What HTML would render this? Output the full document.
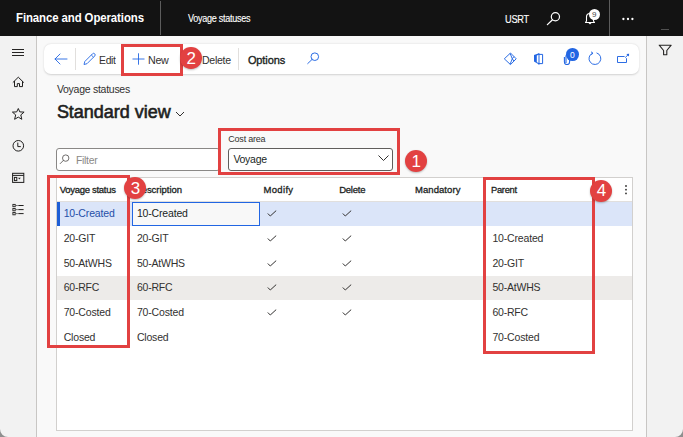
<!DOCTYPE html><html><head><meta charset="utf-8"><style>
html,body{margin:0;padding:0;width:683px;height:437px;overflow:hidden;background:#f8f8f8}
body{position:relative;font-family:"Liberation Sans",sans-serif}
body>div,body>svg{position:absolute}
.t{white-space:nowrap;line-height:1}
</style></head><body>
<div style="left:0px;top:0px;width:683px;height:437px;background:#f9f9f9"></div>
<div style="left:0px;top:36px;width:36px;height:401px;background:#f2f2f2"></div>
<div style="left:36px;top:36px;width:1px;height:401px;background:#c8c6c4"></div>
<div style="left:647px;top:36px;width:36px;height:401px;background:#f2f2f2"></div>
<div style="left:646px;top:36px;width:1px;height:401px;background:#c8c6c4"></div>
<div style="left:0px;top:0px;width:683px;height:36px;background:#131313"></div>
<div style="left:160px;top:1px;width:1px;height:34px;background:#5c5c5c"></div>
<div style="left:609px;top:0px;width:1px;height:36px;background:#5c5c5c"></div>
<div style="left:661px;top:29px;width:8px;height:1px;background:#505050"></div>
<div class="t" style="left:16.40px;top:12.04px;font-size:12px;color:#ffffff;letter-spacing:-0.100px;font-weight:700;transform:scaleX(0.9510);transform-origin:0 0;">Finance and Operations</div>
<div class="t" style="left:188.20px;top:13.64px;font-size:10px;color:#ffffff;letter-spacing:-0.300px;transform:scaleX(0.9034);transform-origin:0 0;-webkit-text-stroke:0.12px #fff">Voyage statuses</div>
<div class="t" style="left:504.90px;top:14.01px;font-size:10.5px;color:#ffffff;letter-spacing:-0.300px;transform:scaleX(0.8766);transform-origin:0 0;-webkit-text-stroke:0.15px #fff">USRT</div>
<svg style="left:545px;top:10px;" width="18" height="18" viewBox="0 0 18 18"><circle cx="10.4" cy="6.8" r="4.1" fill="none" stroke="#fff" stroke-width="1.2"/><line x1="7.5" y1="9.7" x2="2.4" y2="14.6" stroke="#fff" stroke-width="1.3" stroke-linecap="round"/></svg>
<svg style="left:582px;top:9px;" width="16" height="16" viewBox="0 0 16 16"><path d="M3.5 13.5 L4.5 12 V8 A3.5 3.5 0 0 1 11.5 8 V12 L12.5 13.5 Z" fill="none" stroke="#fff" stroke-width="1.1" stroke-linejoin="round"/><path d="M6.6 13.9 L8 15 L9.4 13.9" fill="none" stroke="#fff" stroke-width="1"/></svg>
<div style="left:588.7px;top:8.7px;width:11.2px;height:11.2px;background:#fff;border-radius:50%"></div>
<div class="t" style="left:592.10px;top:10.73px;font-size:8px;color:#444;letter-spacing:0.000px;">9</div>
<svg style="left:618px;top:15px;" width="20" height="8" viewBox="0 0 20 8"><circle cx="5.4" cy="4" r="1.15" fill="#fff"/><circle cx="10" cy="4" r="1.15" fill="#fff"/><circle cx="14.4" cy="4" r="1.15" fill="#fff"/></svg>
<div style="left:12px;top:49px;width:12px;height:1px;background:#252423"></div>
<div style="left:12px;top:52px;width:12px;height:1px;background:#252423"></div>
<div style="left:12px;top:55px;width:12px;height:1px;background:#252423"></div>
<svg style="left:11px;top:75px;" width="14" height="14" viewBox="0 0 14 14"><path d="M1.8 7.6 L7.3 2.2 L12.8 7.6 M3.5 6 V11.6 H6.3 V8.6 H8.5 V11.6 H11.5 V6" fill="none" stroke="#201f1e" stroke-width="1" stroke-linejoin="miter"/></svg>
<svg style="left:11px;top:107px;" width="14" height="14" viewBox="0 0 14 14"><path d="M7.3 1.5 L8.8 4.9 L13.1 5.1 L9.8 7.9 L10.8 12.3 L7.3 10.1 L3.6 12.3 L4.7 7.9 L1.4 5.1 L5.7 4.9 Z" fill="none" stroke="#201f1e" stroke-width="1" stroke-linejoin="miter"/></svg>
<svg style="left:11px;top:139px;" width="14" height="14" viewBox="0 0 14 14"><circle cx="7.3" cy="6.8" r="5.3" fill="none" stroke="#201f1e" stroke-width="1"/><path d="M6.8 3.6 V7.6 H9.8" fill="none" stroke="#201f1e" stroke-width="1"/></svg>
<svg style="left:11px;top:171px;" width="14" height="14" viewBox="0 0 14 14"><rect x="1.6" y="2.3" width="11.2" height="9.1" fill="none" stroke="#201f1e" stroke-width="1"/><line x1="1.6" y1="4.4" x2="12.8" y2="4.4" stroke="#201f1e" stroke-width="1"/><rect x="3.4" y="6.4" width="2.4" height="3.2" fill="none" stroke="#201f1e" stroke-width="1"/><path d="M7.2 6.8 L9.8 6.8 L8.2 8.4 Z" fill="#201f1e"/></svg>
<svg style="left:11px;top:203px;" width="14" height="14" viewBox="0 0 14 14"><rect x="1.9" y="1.4" width="2.3" height="2.3" fill="none" stroke="#201f1e" stroke-width="0.9"/><rect x="1.9" y="5.5" width="2.3" height="2.3" fill="none" stroke="#201f1e" stroke-width="0.9"/><rect x="1.9" y="9.5" width="2.3" height="2.3" fill="none" stroke="#201f1e" stroke-width="0.9"/><path d="M5.4 2.5 H6.5 M7.3 2.5 H12.6 M5.4 6.6 H6.5 M7.3 6.6 H12.6 M5.4 10.6 H6.5 M7.3 10.6 H12.6" stroke="#201f1e" stroke-width="1"/></svg>
<svg style="left:658px;top:44px;" width="15" height="12" viewBox="0 0 15 12"><path d="M1.2 1.2 H13.2 L8.8 6.5 V10.8 H5.6 V6.5 Z" fill="none" stroke="#252423" stroke-width="1.1" stroke-linejoin="round"/></svg>
<div style="left:44px;top:44px;width:595px;height:30px;background:#fff;border-radius:7px;box-shadow:0 0.5px 2px rgba(0,0,0,0.16)"></div>
<svg style="left:53px;top:52px;" width="16" height="14" viewBox="0 0 16 14"><path d="M7 2 L2 7 L7 12 M2 7 H14" fill="none" stroke="#2266e3" stroke-width="0.9" stroke-linejoin="round" stroke-linecap="round"/></svg>
<div style="left:75px;top:48px;width:1px;height:22px;background:#e1dfdd"></div>
<svg style="left:82px;top:52px;" width="15" height="14" viewBox="0 0 15 14"><path d="M2 12.5 L2.8 9.5 L10.5 1.8 A1.4 1.4 0 0 1 12.7 4 L5 11.7 Z M9.3 3 L11.5 5.2" fill="none" stroke="#2266e3" stroke-width="0.9" stroke-linejoin="round"/></svg>
<div class="t" style="left:98.70px;top:55.09px;font-size:11px;color:#323130;letter-spacing:-0.300px;transform:scaleX(0.9416);transform-origin:0 0;">Edit</div>
<svg style="left:131px;top:52px;" width="15" height="14" viewBox="0 0 15 14"><path d="M7.5 1.3 V12.7 M1.5 7 H13.5" fill="none" stroke="#2266e3" stroke-width="0.9"/></svg>
<div class="t" style="left:148.40px;top:55.09px;font-size:11px;color:#323130;letter-spacing:-0.300px;transform:scaleX(0.9717);transform-origin:0 0;">New</div>
<div class="t" style="left:201.80px;top:55.09px;font-size:11px;color:#323130;letter-spacing:-0.300px;transform:scaleX(0.9605);transform-origin:0 0;">Delete</div>
<div style="left:238px;top:48px;width:1px;height:22px;background:#e1dfdd"></div>
<div class="t" style="left:247.90px;top:55.09px;font-size:11px;color:#201f1e;letter-spacing:-0.101px;-webkit-text-stroke:0.35px #201f1e">Options</div>
<svg style="left:305px;top:51px;" width="16" height="15" viewBox="0 0 16 15"><circle cx="9.8" cy="5.7" r="3.8" fill="none" stroke="#2266e3" stroke-width="0.95"/><line x1="7.1" y1="8.4" x2="2.7" y2="12.6" stroke="#2266e3" stroke-width="0.95" stroke-linecap="round"/></svg>
<svg style="left:500px;top:49px;" width="20" height="20" viewBox="0 0 20 20"><path d="M4.3 9.8 L10.5 4 L16.2 9.8 L10.5 15.6 Z M10.1 4.4 L12.3 9.8 L10.1 15.2 M12.3 9.8 L13.9 7.6 M12.3 9.8 L13.9 12" fill="none" stroke="#2266e3" stroke-width="0.95" stroke-linejoin="miter"/></svg>
<svg style="left:532px;top:52px;" width="13" height="14" viewBox="0 0 13 14"><path d="M2 3 L7 1.2 V2.8 L4.8 3.6 V10.2 L7 11 V12.6 L2 9.6 Z" fill="#2266e3"/><path d="M7 1.3 V12.6 M7 2.4 H10.6 V11.6 H7" fill="none" stroke="#2266e3" stroke-width="1"/></svg>
<svg style="left:563px;top:51px;" width="10" height="14" viewBox="0 0 10 14"><path d="M3 12 V5 A1.8 1.8 0 0 1 6.6 5 V11 A2.6 2.6 0 0 1 1.4 11 V6" fill="none" stroke="#2266e3" stroke-width="1.1"/></svg>
<div style="left:566.2px;top:48.1px;width:12.8px;height:12.8px;background:#2266e3;border-radius:50%"></div>
<div class="t" style="left:570.10px;top:50.50px;font-size:8.5px;color:#fff;letter-spacing:0.000px;">0</div>
<svg style="left:587px;top:51px;" width="16" height="16" viewBox="0 0 16 16"><path d="M9.53 1.9 A5.9 5.9 0 1 1 5.7 2.1" fill="none" stroke="#2266e3" stroke-width="0.95"/><path d="M4 0.8 L5.9 2.1 L4.3 3.9" fill="none" stroke="#2266e3" stroke-width="0.95"/></svg>
<svg style="left:615px;top:52px;" width="16" height="13" viewBox="0 0 16 13"><path d="M9.6 4.5 H2.5 V10.5 H11.5 V6.2" fill="none" stroke="#2266e3" stroke-width="0.95"/><path d="M10.2 5.6 L13.2 2.7" fill="none" stroke="#2266e3" stroke-width="0.95"/><path d="M11.3 1.9 L14.1 1.8 L14 4.6 Z" fill="#2266e3"/></svg>
<div class="t" style="left:56.90px;top:83.51px;font-size:10.5px;color:#323130;letter-spacing:-0.268px;">Voyage statuses</div>
<div class="t" style="left:56.90px;top:102.96px;font-size:18px;color:#201f1e;letter-spacing:-0.022px;-webkit-text-stroke:0.6px #201f1e">Standard view</div>
<svg style="left:175px;top:110px;" width="10" height="8" viewBox="0 0 10 8"><path d="M1 2 L5 6 L9 2" fill="none" stroke="#323130" stroke-width="1"/></svg>
<div style="left:56px;top:148px;width:164px;height:23px;background:#fff;border:1px solid #8a8886;border-radius:3px;box-sizing:border-box"></div>
<svg style="left:59px;top:153px;" width="12" height="12" viewBox="0 0 12 12"><circle cx="6.7" cy="5.1" r="3.2" fill="none" stroke="#605e5c" stroke-width="0.9"/><line x1="4.4" y1="7.4" x2="1.2" y2="10.6" stroke="#605e5c" stroke-width="0.9" stroke-linecap="round"/></svg>
<div class="t" style="left:75.80px;top:154.91px;font-size:10.5px;color:#8a8886;letter-spacing:-0.300px;transform:scaleX(0.9894);transform-origin:0 0;">Filter</div>
<div class="t" style="left:228.30px;top:135.08px;font-size:9px;color:#323130;letter-spacing:-0.215px;">Cost area</div>
<div style="left:228px;top:148px;width:165px;height:23px;background:#fff;border:1px solid #605e5c;border-radius:3px;box-sizing:border-box"></div>
<div class="t" style="left:233.40px;top:153.71px;font-size:10.5px;color:#201f1e;letter-spacing:-0.266px;">Voyage</div>
<svg style="left:377px;top:154px;" width="13" height="8" viewBox="0 0 13 8"><path d="M1.5 1.5 L6.5 6.5 L11.5 1.5" fill="none" stroke="#323130" stroke-width="1"/></svg>
<div style="left:56px;top:177px;width:577px;height:254px;background:#fff;border:1px solid #d2d0ce;box-sizing:border-box"></div>
<div style="left:57px;top:201px;width:575px;height:1px;background:#e1dfdd"></div>
<div class="t" style="left:59.70px;top:185.16px;font-size:9.5px;color:#201f1e;letter-spacing:-0.290px;-webkit-text-stroke:0.3px #201f1e">Voyage status</div>
<div class="t" style="left:134.80px;top:185.16px;font-size:9.5px;color:#201f1e;letter-spacing:-0.032px;-webkit-text-stroke:0.3px #201f1e">Description</div>
<div class="t" style="left:263.50px;top:185.16px;font-size:9.5px;color:#201f1e;letter-spacing:0.324px;-webkit-text-stroke:0.3px #201f1e">Modify</div>
<div class="t" style="left:339.20px;top:185.16px;font-size:9.5px;color:#201f1e;letter-spacing:-0.232px;-webkit-text-stroke:0.3px #201f1e">Delete</div>
<div class="t" style="left:415.00px;top:185.16px;font-size:9.5px;color:#201f1e;letter-spacing:0.064px;-webkit-text-stroke:0.3px #201f1e">Mandatory</div>
<div class="t" style="left:491.10px;top:185.16px;font-size:9.5px;color:#201f1e;letter-spacing:-0.300px;transform:scaleX(0.9815);transform-origin:0 0;-webkit-text-stroke:0.3px #201f1e">Parent</div>
<svg style="left:623px;top:184px;" width="6" height="12" viewBox="0 0 6 12"><circle cx="3" cy="2" r="0.9" fill="#323130"/><circle cx="3" cy="5.7" r="0.9" fill="#323130"/><circle cx="3" cy="9.4" r="0.9" fill="#323130"/></svg>
<div style="left:57px;top:202px;width:575px;height:24px;background:#dbe5f9"></div>
<div style="left:57px;top:202px;width:3px;height:24px;background:#1f5fd6"></div>
<div style="left:57px;top:276px;width:575px;height:24px;background:#edebe9"></div>
<div style="left:132px;top:202px;width:128px;height:24px;background:#f8f8f8;border:1.5px solid #2266e3;box-sizing:border-box"></div>
<div class="t" style="left:63.70px;top:208.11px;font-size:10.5px;color:#1f4fa8;letter-spacing:-0.163px;">10-Created</div>
<div class="t" style="left:136.90px;top:208.11px;font-size:10.5px;color:#201f1e;letter-spacing:-0.163px;">10-Created</div>
<svg style="left:267.3px;top:210px;" width="10" height="7" viewBox="0 0 10 7"><path d="M0.8 3.5 L3.3 6 L9.2 0.6" fill="none" stroke="#323130" stroke-width="1"/></svg>
<svg style="left:341.8px;top:210px;" width="10" height="7" viewBox="0 0 10 7"><path d="M0.8 3.5 L3.3 6 L9.2 0.6" fill="none" stroke="#323130" stroke-width="1"/></svg>
<div class="t" style="left:63.70px;top:233.11px;font-size:10.5px;color:#323130;letter-spacing:-0.183px;">20-GIT</div>
<div class="t" style="left:136.90px;top:233.11px;font-size:10.5px;color:#323130;letter-spacing:-0.183px;">20-GIT</div>
<div class="t" style="left:492.40px;top:233.11px;font-size:10.5px;color:#323130;letter-spacing:-0.163px;">10-Created</div>
<svg style="left:267.3px;top:235px;" width="10" height="7" viewBox="0 0 10 7"><path d="M0.8 3.5 L3.3 6 L9.2 0.6" fill="none" stroke="#323130" stroke-width="1"/></svg>
<svg style="left:341.8px;top:235px;" width="10" height="7" viewBox="0 0 10 7"><path d="M0.8 3.5 L3.3 6 L9.2 0.6" fill="none" stroke="#323130" stroke-width="1"/></svg>
<div class="t" style="left:63.70px;top:257.91px;font-size:10.5px;color:#323130;letter-spacing:-0.198px;">50-AtWHS</div>
<div class="t" style="left:136.90px;top:257.91px;font-size:10.5px;color:#323130;letter-spacing:-0.198px;">50-AtWHS</div>
<div class="t" style="left:492.40px;top:257.91px;font-size:10.5px;color:#323130;letter-spacing:-0.183px;">20-GIT</div>
<svg style="left:267.3px;top:259.8px;" width="10" height="7" viewBox="0 0 10 7"><path d="M0.8 3.5 L3.3 6 L9.2 0.6" fill="none" stroke="#323130" stroke-width="1"/></svg>
<svg style="left:341.8px;top:259.8px;" width="10" height="7" viewBox="0 0 10 7"><path d="M0.8 3.5 L3.3 6 L9.2 0.6" fill="none" stroke="#323130" stroke-width="1"/></svg>
<div class="t" style="left:63.70px;top:282.11px;font-size:10.5px;color:#323130;letter-spacing:-0.206px;">60-RFC</div>
<div class="t" style="left:136.90px;top:282.11px;font-size:10.5px;color:#323130;letter-spacing:-0.206px;">60-RFC</div>
<div class="t" style="left:492.40px;top:282.11px;font-size:10.5px;color:#323130;letter-spacing:-0.198px;">50-AtWHS</div>
<svg style="left:267.3px;top:284px;" width="10" height="7" viewBox="0 0 10 7"><path d="M0.8 3.5 L3.3 6 L9.2 0.6" fill="none" stroke="#323130" stroke-width="1"/></svg>
<svg style="left:341.8px;top:284px;" width="10" height="7" viewBox="0 0 10 7"><path d="M0.8 3.5 L3.3 6 L9.2 0.6" fill="none" stroke="#323130" stroke-width="1"/></svg>
<div class="t" style="left:63.70px;top:307.11px;font-size:10.5px;color:#323130;letter-spacing:-0.170px;">70-Costed</div>
<div class="t" style="left:136.90px;top:307.11px;font-size:10.5px;color:#323130;letter-spacing:-0.170px;">70-Costed</div>
<div class="t" style="left:492.40px;top:307.11px;font-size:10.5px;color:#323130;letter-spacing:-0.206px;">60-RFC</div>
<svg style="left:267.3px;top:309px;" width="10" height="7" viewBox="0 0 10 7"><path d="M0.8 3.5 L3.3 6 L9.2 0.6" fill="none" stroke="#323130" stroke-width="1"/></svg>
<svg style="left:341.8px;top:309px;" width="10" height="7" viewBox="0 0 10 7"><path d="M0.8 3.5 L3.3 6 L9.2 0.6" fill="none" stroke="#323130" stroke-width="1"/></svg>
<div class="t" style="left:63.70px;top:332.11px;font-size:10.5px;color:#323130;letter-spacing:-0.183px;">Closed</div>
<div class="t" style="left:136.90px;top:332.11px;font-size:10.5px;color:#323130;letter-spacing:-0.183px;">Closed</div>
<div class="t" style="left:492.40px;top:332.11px;font-size:10.5px;color:#323130;letter-spacing:-0.170px;">70-Costed</div>
<div style="left:121px;top:44px;width:62px;height:32px;border:3px solid #e24141;box-sizing:border-box"></div>
<div style="left:180.35px;top:47.05px;width:21.5px;height:21.5px;background:#e24141;border-radius:50%;box-shadow:0 1px 2px rgba(0,0,0,0.25)"></div>
<div class="t" style="left:186.40px;top:49.51px;font-size:17px;color:#fff;letter-spacing:0.000px;">2</div>
<div style="left:218px;top:128px;width:182px;height:47px;border:3px solid #e24141;box-sizing:border-box"></div>
<div style="left:405.3px;top:149.8px;width:22px;height:22px;background:#e24141;border-radius:50%;box-shadow:0 1px 2px rgba(0,0,0,0.25)"></div>
<div class="t" style="left:411.60px;top:152.51px;font-size:17px;color:#fff;letter-spacing:0.000px;">1</div>
<div style="left:47px;top:175px;width:83px;height:173px;border:3px solid #e24141;box-sizing:border-box"></div>
<div style="left:124.30000000000001px;top:176.70000000000002px;width:22.2px;height:22.2px;background:#e24141;border-radius:50%;box-shadow:0 1px 2px rgba(0,0,0,0.25)"></div>
<div class="t" style="left:130.70px;top:179.51px;font-size:17px;color:#fff;letter-spacing:0.000px;">3</div>
<div style="left:483px;top:177px;width:112px;height:177px;border:3px solid #e24141;box-sizing:border-box"></div>
<div style="left:590.4px;top:179.6px;width:22px;height:22px;background:#e24141;border-radius:50%;box-shadow:0 1px 2px rgba(0,0,0,0.25)"></div>
<div class="t" style="left:596.70px;top:182.31px;font-size:17px;color:#fff;letter-spacing:0.000px;">4</div>
<svg style="left:0px;top:429px;" width="8" height="8" viewBox="0 0 8 8"><path d="M0 0 A8 8 0 0 0 8 8 L0 8 Z" fill="#8f8f8f"/></svg>
<svg style="left:675px;top:429px;" width="8" height="8" viewBox="0 0 8 8"><path d="M8 0 A8 8 0 0 1 0 8 L8 8 Z" fill="#8f8f8f"/></svg>
</body></html>
